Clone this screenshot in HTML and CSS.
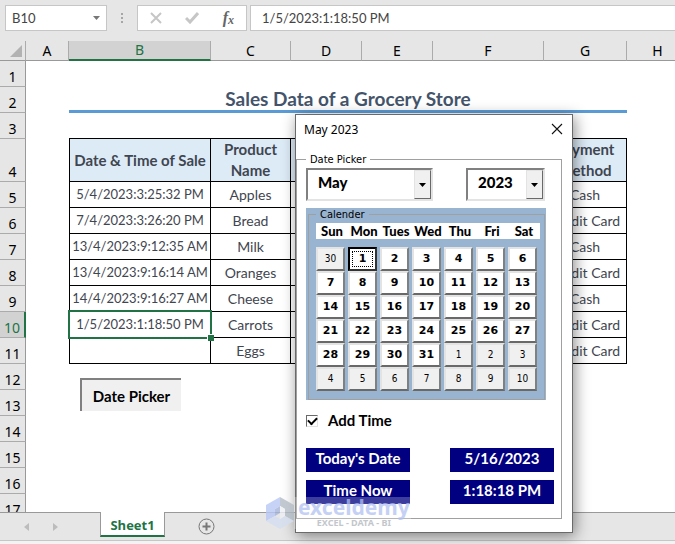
FILE: index.html
```html
<!DOCTYPE html>
<html lang="en">
<head>
    <meta charset="UTF-8">
    <meta name="viewport" content="width=device-width, initial-scale=1.0">
    <title>Sales Data of a Grocery Store</title>
    <link rel="stylesheet" href="styles.css">
</head>
<body>

    <div class="formula-bar">
        <div class="name-box">
            <input type="text" class="name-input" value="B10" aria-label="Name Box">
            <svg width="7" height="4" viewBox="0 0 7 4"><path d="M0 0h7L3.5 4z" fill="#777"/></svg>
        </div>
        <svg class="grip" width="2" height="11" viewBox="0 0 2 11"><path d="M0 0h2v2H0zM0 4h2v2H0zM0 8h2v2H0z" fill="#a6a6a6"/></svg>
        <div class="formula-tools">
            <button type="button" aria-label="Cancel"><svg width="12" height="12" viewBox="0 0 12 12"><path d="M1 1l10 10M11 1L1 11" stroke="#c6c6c6" stroke-width="2" fill="none"/></svg></button>
            <button type="button" aria-label="Enter"><svg width="14" height="12" viewBox="0 0 14 12"><path d="M1 6l4 4 8-9" stroke="#c6c6c6" stroke-width="3" fill="none"/></svg></button>
            <button type="button" class="fx" aria-label="Insert Function">f<sub>x</sub></button>
        </div>
        <input type="text" class="formula-input" value="1/5/2023:1:18:50 PM" aria-label="Formula">
    </div>

    <main class="sheet">
        <table class="grid">
            <colgroup>
                <col class="w-num"><col class="w-a"><col class="w-b"><col class="w-c"><col class="w-d"><col class="w-e"><col class="w-f"><col class="w-g"><col>
            </colgroup>
            <thead>
                <tr>
                    <th class="corner"><svg width="12" height="12" viewBox="0 0 12 12"><path d="M12 0v12H0z" fill="#b2b2b2"/></svg></th>
                    <th>A</th><th class="active">B</th><th>C</th><th>D</th><th>E</th><th>F</th><th>G</th><th>H</th>
                </tr>
            </thead>
            <tbody>
                <tr><th>1</th><td colspan="8"></td></tr>
                <tr><th>2</th><td></td><td class="title" colspan="6">Sales Data of a Grocery Store</td><td></td></tr>
                <tr><th>3</th><td></td><td class="line" colspan="6"></td><td></td></tr>
                <tr class="head data"><th>4</th><td></td><td>Date &amp; Time of Sale</td><td>Product Name</td><td></td><td></td><td></td><td>Payment Method</td><td></td></tr>
                <tr class="data"><th>5</th><td></td><td class="date">5/4/2023:3:25:32 PM</td><td>Apples</td><td></td><td></td><td></td><td>Cash</td><td></td></tr>
                <tr class="data"><th>6</th><td></td><td class="date">7/4/2023:3:26:20 PM</td><td>Bread</td><td></td><td></td><td></td><td>Credit Card</td><td></td></tr>
                <tr class="data"><th>7</th><td></td><td class="date">13/4/2023:9:12:35 AM</td><td>Milk</td><td></td><td></td><td></td><td>Cash</td><td></td></tr>
                <tr class="data"><th>8</th><td></td><td class="date">13/4/2023:9:16:14 AM</td><td>Oranges</td><td></td><td></td><td></td><td>Credit Card</td><td></td></tr>
                <tr class="data"><th>9</th><td></td><td class="date">14/4/2023:9:16:27 AM</td><td>Cheese</td><td></td><td></td><td></td><td>Cash</td><td></td></tr>
                <tr class="data"><th class="active">10</th><td></td><td class="date selected">1/5/2023:1:18:50 PM</td><td>Carrots</td><td></td><td></td><td></td><td>Credit Card</td><td></td></tr>
                <tr class="data"><th>11</th><td></td><td></td><td>Eggs</td><td></td><td></td><td></td><td>Credit Card</td><td></td></tr>
                <tr><th>12</th><td colspan="8"></td></tr>
                <tr><th>13</th><td colspan="8"></td></tr>
                <tr><th>14</th><td colspan="8"></td></tr>
                <tr><th>15</th><td colspan="8"></td></tr>
                <tr><th>16</th><td colspan="8"></td></tr>
                <tr><th>17</th><td colspan="8"></td></tr>
            </tbody>
        </table>
        <button type="button" class="picker-button">Date Picker</button>
    </main>

    <footer class="tabs">
        <button type="button" class="nav" aria-label="Previous sheet"><svg width="5" height="8" viewBox="0 0 5 8"><path d="M5 0v8L0 4z" fill="#bcbcbc"/></svg></button>
        <button type="button" class="nav" aria-label="Next sheet"><svg width="5" height="8" viewBox="0 0 5 8"><path d="M0 0v8l5-4z" fill="#bcbcbc"/></svg></button>
        <a class="tab" href="#sheet1">Sheet1</a>
        <button type="button" class="add" aria-label="New sheet"><svg width="17" height="17" viewBox="0 0 17 17"><circle cx="8.5" cy="8.5" r="7.5" fill="none" stroke="#767676"/><path d="M8.500 4.500v8M4.500 8.500h8" stroke="#767676" stroke-width="2"/></svg></button>
    </footer>
    <div class="status"></div>

    <form class="dialog">
        <header class="dialog-title">
            <span>May 2023</span>
            <button type="button" aria-label="Close"><svg width="12" height="12" viewBox="0 0 12 12"><path d="M1 1l10 10M11 1L1 11" stroke="#111" stroke-width="1.100" fill="none"/></svg></button>
        </header>
        <fieldset class="picker">
            <legend>Date Picker</legend>
            <div class="combos">
                <span class="combo month">
                    <select aria-label="Month"><option>May</option></select>
                    <i class="arrow"><svg width="7" height="4" viewBox="0 0 7 4"><path d="M0 0h7L3.500 4z"/></svg></i>
                </span>
                <span class="combo year">
                    <select aria-label="Year"><option>2023</option></select>
                    <i class="arrow"><svg width="7" height="4" viewBox="0 0 7 4"><path d="M0 0h7L3.500 4z"/></svg></i>
                </span>
            </div>

            <div class="calendar">
                <fieldset>
                    <legend>Calender</legend>
                    <div class="weekdays">
                        <span>Sun</span><span>Mon</span><span>Tues</span><span>Wed</span><span>Thu</span><span>Fri</span><span>Sat</span>
                    </div>
                    <div class="days">
                        <button type="button" class="other">30</button><button type="button" class="focus">1</button><button type="button">2</button><button type="button">3</button><button type="button">4</button><button type="button">5</button><button type="button">6</button>
                        <button type="button">7</button><button type="button">8</button><button type="button">9</button><button type="button">10</button><button type="button">11</button><button type="button">12</button><button type="button">13</button>
                        <button type="button">14</button><button type="button">15</button><button type="button">16</button><button type="button">17</button><button type="button">18</button><button type="button">19</button><button type="button">20</button>
                        <button type="button">21</button><button type="button">22</button><button type="button">23</button><button type="button">24</button><button type="button">25</button><button type="button">26</button><button type="button">27</button>
                        <button type="button">28</button><button type="button">29</button><button type="button">30</button><button type="button">31</button><button type="button" class="other">1</button><button type="button" class="other">2</button><button type="button" class="other">3</button>
                        <button type="button" class="other">4</button><button type="button" class="other">5</button><button type="button" class="other">6</button><button type="button" class="other">7</button><button type="button" class="other">8</button><button type="button" class="other">9</button><button type="button" class="other">10</button>
                    </div>
                </fieldset>
            </div>

            <div class="add-time">
                <input type="checkbox" id="addTime" checked>
                <label for="addTime">Add Time</label>
            </div>

            <div class="now">
                <span>Today's Date</span><span>5/16/2023</span>
                <span>Time Now</span><span>1:18:18 PM</span>
            </div>
        </fieldset>
    </form>

    <div class="watermark">
        <svg width="28" height="32" viewBox="0 0 28 32">
            <path d="M14 0L0 8v16l9-5v-7l5-3z" fill="#b9c9f5"/>
            <path d="M14 0l14 8v16l-9-5v-7l-5-3z" fill="#b4bcc6"/>
            <path d="M0 24l14 8 14-8-9-5-5 3-5-3z" fill="#d5def0"/>
            <path d="M14 9l5 3v7l-5 3z" fill="#edf0f5"/>
            <path d="M14 9l-5 3v7l5-3z" fill="#a5b4d8"/>
        </svg>
        <div class="brand">
            <strong>exceldemy</strong>
            <small>EXCEL - DATA - BI</small>
        </div>
    </div>

</body>
</html>
```

FILE: styles.css
```css
* {
    box-sizing: border-box;
}

body {
    margin: 0;
    height: 100vh;
    display: flex;
    flex-direction: column;
    position: relative;
    overflow: hidden;
    background-color: #e6e6e6;
    font-family: Lato, Calibri, sans-serif;
    color: #000;
}

button,
input,
select {
    font: inherit;
    color: inherit;
    margin: 0;
    padding: 0;
    border: none;
    background: none;
}

button {
    cursor: pointer;
}

svg {
    display: block;
}

/* formula bar */
.formula-bar {
    display: flex;
    align-items: center;
    flex: none;
    padding: 5px 0 10px 5px;
    font-size: 13px;
    color: #444;
}

.name-box,
.formula-tools,
.formula-input {
    height: 26px;
    background-color: #fff;
    border: 1px solid #c6c6c6;
}

.name-box {
    width: 102px;
    display: flex;
    align-items: center;
    padding: 0 6px;
}

.name-input {
    flex: 1;
    min-width: 0;
}

.grip {
    margin: 0 14px;
}

.formula-tools {
    width: 110px;
    display: flex;
    align-items: center;
    justify-content: space-between;
    padding: 0 12px;
}

.fx {
    font: italic bold 16px "Liberation Serif", serif;
    color: #666;
}

.fx sub {
    font-size: 12px;
    vertical-align: -1px;
}

.formula-input {
    flex: 1;
    min-width: 0;
    margin-left: 3px;
    padding-left: 11px;
    border-right: none;
}

/* sheet */
.sheet {
    flex: 1;
    min-height: 0;
    position: relative;
    overflow: hidden;
    background-color: #fff;
}

/* last column runs past the window edge */
.grid {
    width: calc(100% + 14px);
    table-layout: fixed;
    border-collapse: separate;
    border-spacing: 0;
    font-size: 14px;
    text-align: center;
}

.w-num { width: 26px; }
.w-a { width: 43px; }
.w-b { width: 142px; }
.w-c { width: 80px; }
.w-d { width: 71px; }
.w-e { width: 71px; }
.w-f { width: 111px; }
.w-g { width: 83px; }

.grid th,
.grid td {
    height: 26px;
    padding: 0;
}

.grid th {
    background-color: #e6e6e6;
    font-family: "Noto Sans", "Segoe UI", sans-serif;
    font-weight: normal;
    line-height: 18px;
    border-right: 1px solid #ababab;
    border-bottom: 1px solid #ababab;
}

.grid thead th {
    height: 20px;
    border-bottom-color: #999;
}

.grid tbody th {
    vertical-align: bottom;
    border-right-color: #999;
}

.grid th.active {
    background-color: #d2d2d2;
    color: #217346;
}

.grid thead th.active {
    border-bottom: 2px solid #217346;
}

.grid tbody th.active {
    border-right: 2px solid #217346;
}

.grid .corner svg {
    margin: 1px 3px 0 auto;
}

.grid .title {
    font-size: 19px;
    font-weight: bold;
    line-height: 22px;
    color: #44546a;
    border-bottom: 3px solid #5b9bd5;
}

.grid .line {
    border-bottom: 1px solid #000;
}

.data td {
    color: #3f4650;
    line-height: 21px;
}

.data .date {
    font-size: 13px;
    white-space: nowrap;
}

.data td:nth-child(n+3):nth-child(-n+8) {
    border-right: 1px solid #000;
    border-bottom: 1px solid #000;
}

.data td:nth-child(3) {
    border-left: 1px solid #000;
}

.grid .head td {
    height: 43px;
    font-size: 15px;
    font-weight: bold;
}

.head td:nth-child(n+3):nth-child(-n+8) {
    background-color: #ddebf7;
}

.selected {
    position: relative;
}

.selected::before {
    content: "";
    position: absolute;
    inset: -2px;
    border: 2px solid #217346;
}

.selected::after {
    content: "";
    position: absolute;
    right: -4px;
    bottom: -4px;
    width: 6px;
    height: 6px;
    background-color: #217346;
    border-top: 1px solid #fff;
    border-left: 1px solid #fff;
}

.picker-button {
    position: absolute;
    left: 80px;
    top: 337px;
    width: 101px;
    height: 33px;
    background-color: #f0f0f0;
    border-top: 2px solid #808080;
    border-left: 2px solid #808080;
    font-size: 15px;
    font-weight: bold;
}

/* sheet tabs */
.tabs {
    flex: none;
    height: 29px;
    display: flex;
    align-items: flex-start;
    border-top: 1px solid #999;
    border-bottom: 1px solid #c6c6c6;
}

.nav {
    height: 27px;
    margin-left: 24px;
}

.tab {
    width: 65px;
    height: 25px;
    margin: -1px 33px 0 42px;
    background-color: #fff;
    border-left: 1px solid #999;
    border-right: 1px solid #999;
    border-bottom: 2px solid #217346;
    color: #217346;
    font: bold 13px/26px "Open Sans", "Segoe UI", sans-serif;
    text-align: center;
    text-decoration: none;
}

.add {
    height: 27px;
}

.status {
    flex: none;
    height: 3px;
    background-color: #f3f3f3;
}

/* date picker window */
.dialog {
    position: absolute;
    left: 295px;
    top: 114px;
    width: 278px;
    height: 419px;
    background-color: #fff;
    border: 1px solid #6a6a6a;
    box-shadow: 2px 3px 14px rgba(0, 0, 0, 0.45);
}

.dialog-title {
    height: 38px;
    display: flex;
    align-items: flex-start;
    justify-content: space-between;
    padding: 8px 9px 0 8px;
    font: 12px/14px "Noto Sans", "Segoe UI", sans-serif;
}

fieldset {
    margin: 0;
    min-width: 0;
    border: 1px solid #a0a0a0;
}

legend {
    padding: 0 4px;
    font: 11px/13px "DejaVu Sans Condensed", Tahoma, sans-serif;
}

.picker {
    width: 266px;
    padding: 2px 7px 14px 9px;
}

.combos {
    display: flex;
    justify-content: space-between;
    padding-right: 9px;
}

.combo {
    position: relative;
    height: 33px;
    border: 2px solid;
    border-color: #808080 #e3e3e3 #e3e3e3 #808080;
}

.month { width: 127px; }
.year { width: 79px; }

.combo select {
    appearance: none;
    display: block;
    width: 100%;
    height: 24px;
    padding-left: 10px;
    font-size: 15px;
    font-weight: 900;
}

.arrow {
    position: absolute;
    top: 0;
    right: 0;
    width: 17px;
    height: 29px;
    display: flex;
    align-items: center;
    justify-content: center;
    background-color: #f0f0f0;
    border: 1px solid;
    border-color: #e3e3e3 #696969 #696969 #e3e3e3;
    pointer-events: none;
}

.calendar {
    width: 240px;
    margin-top: 7px;
    padding: 0 1px 0 2px;
    background-color: #99b4d1;
}

.calendar fieldset {
    padding: 2px 4px 8px 7px;
}

.calendar legend {
    background-color: #99b4d1;
}

.weekdays,
.days {
    display: grid;
    grid-template-columns: repeat(7, 32px);
}

.weekdays {
    margin-bottom: 8px;
    background-color: #fff;
    font-size: 13px;
    font-weight: 900;
    line-height: 16px;
}

.weekdays span {
    display: flex;
    justify-content: center;
}

.days button {
    width: 29px;
    height: 24px;
    background-color: #fff;
    border: 2px solid;
    border-color: #e3e3e3 #808080 #696969 #e3e3e3;
    font: bold 11px/18px "DejaVu Sans", Verdana, sans-serif;
    white-space: nowrap;
}

.days .other {
    background-color: #f0f0f0;
    font: 10px/18px "DejaVu Sans Condensed", Tahoma, sans-serif;
}

.days .focus {
    border-color: #000 #333 #333 #000;
    outline: 1px dotted #000;
    outline-offset: -5px;
}

.add-time {
    display: flex;
    align-items: center;
    gap: 10px;
    margin: 12px 0 19px;
    font-size: 15px;
    font-weight: bold;
    line-height: 17px;
}

.add-time input {
    appearance: none;
    width: 12px;
    height: 12px;
    border: 1px solid;
    border-color: #696969 #e3e3e3 #e3e3e3 #696969;
    display: grid;
    place-content: center;
}

.add-time input:checked::before {
    content: "";
    width: 7px;
    height: 4px;
    margin-top: -2px;
    border: solid #000;
    border-width: 0 0 2px 2px;
    transform: rotate(-45deg);
}

.now {
    display: grid;
    grid-template-columns: 104px 104px;
    justify-content: space-between;
    gap: 8px;
}

.now span {
    height: 24px;
    background-color: #000080;
    color: #fff;
    font-size: 15px;
    font-weight: bold;
    line-height: 20px;
    text-align: center;
}

.watermark {
    position: absolute;
    left: 266px;
    top: 497px;
    display: flex;
    opacity: 0.8;
}

.brand {
    padding: 0 1px 0 4px;
    background-color: rgba(255, 255, 255, 0.3);
    text-align: center;
}

.brand strong {
    display: block;
    font: bold 21px/20px "Noto Sans", sans-serif;
    color: #b7c5f3;
}

.brand small {
    display: block;
    font: bold 9px/12px "Noto Sans", sans-serif;
    color: #b5b9c0;
}
```
